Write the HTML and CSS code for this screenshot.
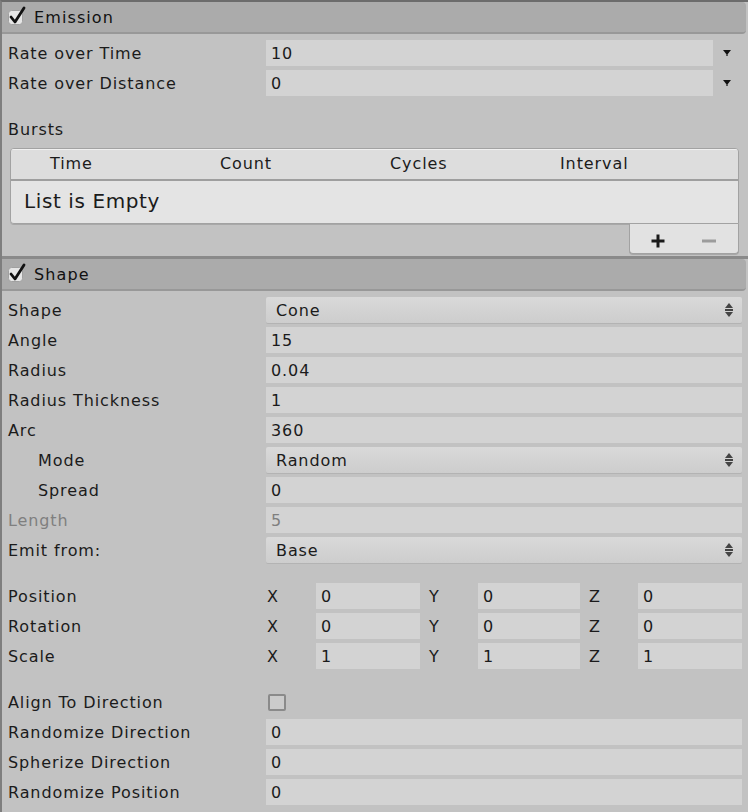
FILE: index.html
```html
<!DOCTYPE html>
<html>
<head>
<meta charset="utf-8">
<link rel="stylesheet" href="styles.css">
</head>
<body>
<div class="inspector">
  <section class="module">
    <div class="module-header">
      <svg class="toggle" width="22" height="22" viewBox="0 0 22 22"><rect x="2.5" y="6.5" width="14" height="14" rx="3" fill="#e6e6e6" stroke="#a0a0a0"/><path d="M5 13 L9 18 L18 4" fill="none" stroke="#111" stroke-width="2.8" stroke-linejoin="round" stroke-linecap="round"/></svg>
      <span class="module-title">Emission</span>
    </div>
    <div class="module-body">
      <div class="row"><span class="label">Rate over Time</span><div class="field-with-curve"><span class="field">10</span><svg class="curve-arrow" width="10" height="8" viewBox="0 0 10 8"><path d="M1 1 H9 L5 6 Z" fill="#111"/><rect x="4" y="5" width="2" height="2" fill="#555"/></svg></div></div>
      <div class="row"><span class="label">Rate over Distance</span><div class="field-with-curve"><span class="field">0</span><svg class="curve-arrow" width="10" height="8" viewBox="0 0 10 8"><path d="M1 1 H9 L5 6 Z" fill="#111"/><rect x="4" y="5" width="2" height="2" fill="#555"/></svg></div></div>
      <div class="row spaced"><span class="label">Bursts</span></div>
      <div class="list">
        <div class="list-head"><span>Time</span><span>Count</span><span>Cycles</span><span>Interval</span></div>
        <div class="list-body">List is Empty</div>
      </div>
      <div class="list-footer">
        <svg width="16" height="16" viewBox="0 0 16 16"><rect x="1.5" y="6.5" width="13" height="3" fill="#1a1a1a"/><rect x="6.5" y="1.5" width="3" height="13" fill="#1a1a1a"/></svg>
        <svg width="16" height="16" viewBox="0 0 16 16"><rect x="1" y="6.5" width="14" height="3" fill="#9c9c9c"/></svg>
      </div>
    </div>
  </section>
  <section class="module">
    <div class="module-header">
      <svg class="toggle" width="22" height="22" viewBox="0 0 22 22"><rect x="2.5" y="6.5" width="14" height="14" rx="3" fill="#e6e6e6" stroke="#a0a0a0"/><path d="M5 13 L9 18 L18 4" fill="none" stroke="#111" stroke-width="2.8" stroke-linejoin="round" stroke-linecap="round"/></svg>
      <span class="module-title">Shape</span>
    </div>
    <div class="module-body shape-body">
      <div class="row"><span class="label">Shape</span><span class="popup">Cone<svg class="updown" width="10" height="16" viewBox="0 0 10 16"><path d="M5 1 L9 6 H1 Z" fill="#444"/><rect x="1" y="7" width="8" height="2" fill="#444"/><path d="M1 10 H9 L5 15 Z" fill="#444"/></svg></span></div>
      <div class="row"><span class="label">Angle</span><span class="field">15</span></div>
      <div class="row"><span class="label">Radius</span><span class="field">0.04</span></div>
      <div class="row"><span class="label">Radius Thickness</span><span class="field">1</span></div>
      <div class="row"><span class="label">Arc</span><span class="field">360</span></div>
      <div class="row"><span class="label indent">Mode</span><span class="popup">Random<svg class="updown" width="10" height="16" viewBox="0 0 10 16"><path d="M5 1 L9 6 H1 Z" fill="#444"/><rect x="1" y="7" width="8" height="2" fill="#444"/><path d="M1 10 H9 L5 15 Z" fill="#444"/></svg></span></div>
      <div class="row"><span class="label indent">Spread</span><span class="field">0</span></div>
      <div class="row disabled"><span class="label">Length</span><span class="field">5</span></div>
      <div class="row"><span class="label">Emit from:</span><span class="popup">Base<svg class="updown" width="10" height="16" viewBox="0 0 10 16"><path d="M5 1 L9 6 H1 Z" fill="#444"/><rect x="1" y="7" width="8" height="2" fill="#444"/><path d="M1 10 H9 L5 15 Z" fill="#444"/></svg></span></div>
      <div class="row spaced"><span class="label">Position</span><div class="vector"><div class="axis"><span class="axis-label">X</span><span class="field">0</span></div><div class="axis"><span class="axis-label">Y</span><span class="field">0</span></div><div class="axis"><span class="axis-label">Z</span><span class="field">0</span></div></div></div>
      <div class="row"><span class="label">Rotation</span><div class="vector"><div class="axis"><span class="axis-label">X</span><span class="field">0</span></div><div class="axis"><span class="axis-label">Y</span><span class="field">0</span></div><div class="axis"><span class="axis-label">Z</span><span class="field">0</span></div></div></div>
      <div class="row"><span class="label">Scale</span><div class="vector"><div class="axis"><span class="axis-label">X</span><span class="field">1</span></div><div class="axis"><span class="axis-label">Y</span><span class="field">1</span></div><div class="axis"><span class="axis-label">Z</span><span class="field">1</span></div></div></div>
      <div class="row spaced"><span class="label">Align To Direction</span><span class="checkbox"></span></div>
      <div class="row"><span class="label">Randomize Direction</span><span class="field">0</span></div>
      <div class="row"><span class="label">Spherize Direction</span><span class="field">0</span></div>
      <div class="row"><span class="label">Randomize Position</span><span class="field">0</span></div>
    </div>
  </section>
</div>
</body>
</html>
```
FILE: styles.css
```css
* { box-sizing: border-box; }
html, body { margin: 0; padding: 0; }
body {
  background: #c2c2c2;
  font-family: "DejaVu Sans", "Liberation Sans", sans-serif;
  font-size: 16px;
  letter-spacing: 0.9px;
  color: #1b1b1b;
  width: 748px;
  height: 812px;
  overflow: hidden;
}
.inspector {
  border-left: 2px solid #7e7e7e;
  border-top: 2px solid #6c6c6c;
  min-height: 812px;
  background: #c2c2c2;
}
.module {
  border-bottom: 3px solid #8a8a8a;
}
.module:last-child { border-bottom: none; }
.module-header {
  height: 32px;
  background: #ababab;
  border-bottom: 2px solid #989898;
  border-radius: 0 4px 4px 0;
  margin-right: 2px;
  display: flex;
  align-items: center;
  padding-left: 4px;
}
.toggle { margin-right: 6px; flex: none; margin-top: -4px; }
.module-title { font-size: 16px; letter-spacing: 1.1px; color: #111; }
.module-body {
  padding: 6px 6px 2px 6px;
  display: flex;
  flex-direction: column;
  gap: 4px;
}
.row {
  display: grid;
  grid-template-columns: 258px 1fr;
  height: 26px;
  align-items: center;
}
.row.spaced { margin-top: 16px; }
.label { white-space: nowrap; padding-top: 1px; }
.label.indent { padding-left: 30px; }
.field {
  height: 26px;
  background: #d3d3d3;
  line-height: 27px;
  padding-left: 5px;
}
.disabled .label, .disabled .field { color: #7f7f7f; }
.field-with-curve {
  display: grid;
  grid-template-columns: 1fr 29px;
  align-items: center;
}
.curve-arrow { justify-self: center; margin-left: -1px; }
.popup {
  height: 26px;
  line-height: 27px;
  padding-left: 10px;
  background: linear-gradient(#d9d9d9, #cdcdcd);
  box-shadow: 0 1px 0 #b3b3b3;
  border-radius: 2px;
  display: flex;
  justify-content: space-between;
  align-items: center;
}
.updown { margin-right: 8px; }
.list {
  margin: 2px 3px 0 2px;
  border: 1px solid #a2a2a2;
  border-radius: 4px 4px 0 4px;
  overflow: hidden;
  box-shadow: 0 1px 0 #a8a8a8;
}
.list-head {
  height: 32px;
  background: #dddddd;
  border-top: 1px solid #f0f0f0;
  border-bottom: 2px solid #9e9e9e;
  display: grid;
  grid-template-columns: 170px 170px 170px 1fr;
  padding-left: 39px;
  padding-bottom: 3px;
  align-items: center;
}
.list-body {
  height: 42px;
  background: #e4e4e4;
  font-size: 20px;
  letter-spacing: 0.6px;
  padding-left: 13px;
  line-height: 40px;
}
.list-footer {
  align-self: flex-end;
  width: 110px;
  height: 30px;
  margin: -4px 3px 0 0;
  background: #e2e2e2;
  border: 1px solid #a2a2a2;
  border-top: none;
  border-radius: 0 0 4px 4px;
  box-shadow: 0 1px 0 #a8a8a8;
  display: flex;
  align-items: center;
  justify-content: space-around;
  padding: 4px 12px 0 10px;
  gap: 16px;
}
.shape-body { padding-top: 6px; }
.vector {
  display: grid;
  grid-template-columns: 154px 152px 154px;
  gap: 8px;
}
.axis {
  display: grid;
  grid-template-columns: 50px 1fr;
  align-items: center;
}
.axis-label { padding-left: 1px; padding-top: 1px; }
.checkbox {
  width: 18px;
  height: 17px;
  margin-left: 2px;
  border: 2px solid #8a8a8a;
  border-radius: 2px;
  background: #cbcbcb;
}
```
